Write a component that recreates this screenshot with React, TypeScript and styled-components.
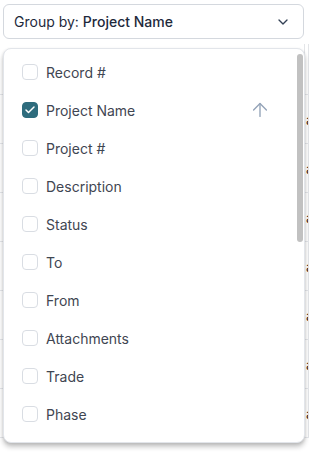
import React from 'react';
import styled, { createGlobalStyle } from 'styled-components';
import { ChevronDown, ArrowUp, Check } from 'lucide-react';

const columns = [
  'Record #',
  'Project Name',
  'Project #',
  'Description',
  'Status',
  'To',
  'From',
  'Attachments',
  'Trade',
  'Phase',
  'Created By',
  'Created Date',
  'Due Date',
  'Responsible Party',
  'Cost Code',
  'Location',
  'Spec Section',
  'Priority',
  'Ball In Court',
  'Closed Date',
  'Last Modified',
];

const tableRows = ['', 'abc', 'abc', 'abc', 'abc', 'abc', 'abc', 'abc'];

// visible part of the list vs. its full height, for the scroll thumb
const VISIBLE = 393;
const FULL = columns.length * 38 + 8;

const App = () => {
  const selected = 'Project Name';
  const thumb = Math.round((385 * VISIBLE) / FULL);

  return (
    <Page>
      <GlobalStyle />
      <Picker>
        <SelectButton type="button">
          <span>
            Group by: <strong>{selected}</strong>
          </span>
          <ChevronDown size={16} strokeWidth={2} color="#334155" />
        </SelectButton>
        <Menu>
          <MenuList>
            {columns.map((name) => {
              const checked = name === selected;
              return (
                <MenuItem key={name}>
                  <Box $checked={checked}>
                    {checked && <Check size={12} strokeWidth={3} color="#fff" />}
                  </Box>
                  <Label>{name}</Label>
                  {checked && (
                    <SortIcon>
                      <ArrowUp size={22} strokeWidth={1.5} color="#94a3b8" />
                    </SortIcon>
                  )}
                </MenuItem>
              );
            })}
          </MenuList>
          <Thumb style={{ height: thumb }} />
        </Menu>
      </Picker>
      <Table>
        {tableRows.map((text, i) => (
          <TableRow key={i} $header={i === 0}>
            <Cell />
            <Cell>{text}</Cell>
          </TableRow>
        ))}
      </Table>
    </Page>
  );
};

const GlobalStyle = createGlobalStyle`
  * { box-sizing: border-box; }
  body {
    margin: 0;
    background: #fff;
    font-family: Inter, 'Noto Sans', sans-serif;
    overflow: hidden;
  }
`;

const Page = styled.div`
  padding: 4px 0 0 3px;
  width: 309px;
  height: 456px;
  overflow: hidden;
`;

const Picker = styled.div`
  position: relative;
  width: 301px;
  z-index: 2;
`;

const SelectButton = styled.button`
  width: 100%;
  height: 35px;
  display: flex;
  align-items: center;
  justify-content: space-between;
  padding: 0 12px 0 10px;
  border: 1px solid #d4d8de;
  border-radius: 6px;
  background: #fff;
  font-family: inherit;
  font-size: 14px;
  color: #1e293b;
  > span strong {
    font-weight: 500;
  }
`;

const Menu = styled.div`
  position: absolute;
  top: 44px;
  left: 0;
  width: 302px;
  height: 395px;
  background: #fff;
  border: 1px solid #e2e5ea;
  border-radius: 8px;
  box-shadow: 0 4px 5px rgba(0, 0, 0, 0.22), 0 1px 3px rgba(0, 0, 0, 0.1);
  overflow: hidden;
`;

const MenuList = styled.ul`
  list-style: none;
  margin: 0;
  padding: 4px 0;
  height: 100%;
  overflow: hidden;
`;

const Thumb = styled.div`
  position: absolute;
  top: 5px;
  right: 1px;
  width: 6px;
  border-radius: 3px;
  background: #c1c1c1;
`;

const MenuItem = styled.li`
  height: 38px;
  display: flex;
  align-items: center;
  gap: 8px;
  padding: 0 33px 0 18px;
  font-size: 14px;
  color: #3f4652;
`;

const Box = styled.span<{ $checked: boolean }>`
  width: 16px;
  height: 16px;
  flex-shrink: 0;
  display: flex;
  align-items: center;
  justify-content: center;
  border-radius: 4px;
  border: 1px solid ${(p) => (p.$checked ? '#2e6c7d' : '#d9dde3')};
  background: ${(p) => (p.$checked ? '#2e6c7d' : '#fff')};
`;

const Label = styled.span`
  flex: 1;
`;

const SortIcon = styled.span`
  display: flex;
`;

const Table = styled.div`
  margin-top: 5px;
  margin-left: -3px;
`;

const TableRow = styled.div<{ $header: boolean }>`
  display: grid;
  grid-template-columns: 305px 1fr;
  height: ${(p) => (p.$header ? '51px' : '49px')};
  border-bottom: 1px solid #e5e7eb;
`;

const Cell = styled.div`
  display: flex;
  align-items: center;
  padding-left: 1px;
  border-right: 1px solid #e3e5e8;
  font-size: 14px;
  color: #3b2a1a;
  overflow: hidden;
  white-space: nowrap;
`;

export default App;
